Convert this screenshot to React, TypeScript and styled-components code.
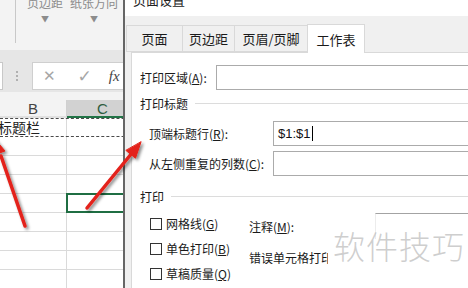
import React from "react";
import styled, { createGlobalStyle } from "styled-components";

const Global = createGlobalStyle`
  html, body {
    margin: 0;
    padding: 0;
    background: #fff;
  }
  body {
    font-family: "Noto Sans CJK SC", "Noto Sans", sans-serif;
    color: #1a1a1a;
  }
`;

const Screen = styled.div`
  position: relative;
  width: 468px;
  height: 288px;
  overflow: hidden;
  background: #fff;
`;

/* ---------- excel side ---------- */
const Sheet = styled.div`
  display: flex;
  flex-direction: column;
  width: 160px;
`;

const Ribbon = styled.div`
  height: 50px;
  background: #f3f3f3;
  display: flex;
`;

const RibbonSep = styled.div`
  width: 1px;
  height: 43px;
  margin-left: 15px;
  background: #c8c8c8;
`;

const RibbonGroup = styled.div`
  display: flex;
  gap: 7px;
  margin-left: 11px;
`;

const RibbonItem = styled.div`
  display: flex;
  flex-direction: column;
  align-items: center;
  font-size: 12px;
  line-height: 16px;
  color: #8c8c8c;
  margin-top: -5px;
  white-space: nowrap;
`;

const Caret = styled.span`
  font-size: 8px;
  line-height: 10px;
  margin-top: 3px;
  color: #8c8c8c;
`;

const FormulaBand = styled.div`
  height: 42px;
  background: #e6e6e6;
  display: flex;
  align-items: flex-start;
  padding-top: 12px;
  box-sizing: border-box;
`;

const NameBox = styled.div`
  width: 3px;
  height: 28px;
  background: #fff;
  border-right: 1px solid #c8c8c8;
  border-top: 1px solid #c8c8c8;
  border-bottom: 1px solid #c8c8c8;
  box-sizing: border-box;
`;

const Dots = styled.div`
  width: 2px;
  height: 10px;
  margin: 9px 0 0 13px;
  background: repeating-linear-gradient(#b0b0b0 0 2px, transparent 2px 4px);
`;

const FormulaBox = styled.div`
  margin-left: 14px;
  flex: 1;
  height: 28px;
  background: #fff;
  border: 1px solid #cfcfcf;
  box-sizing: border-box;
  display: flex;
  align-items: center;
  font-family: "DejaVu Sans", sans-serif;
  color: #a6a6a6;
`;

const FxGlyph = styled.span<{ $x: number; $size: number }>`
  margin-left: ${(p) => p.$x}px;
  font-size: ${(p) => p.$size}px;
  font-weight: bold;
`;

const Fx = styled.span`
  margin-left: 17px;
  font-family: "Liberation Serif", serif;
  font-style: italic;
  font-size: 15px;
  color: #444;
`;

const HeaderGap = styled.div`
  height: 8px;
  background: #f3f3f3;
`;

const ColHeaders = styled.div`
  display: flex;
  height: 18px;
  background: #f3f3f3;
`;

const ColHead = styled.div<{ $w: number; $sel?: boolean }>`
  width: ${(p) => p.$w}px;
  box-sizing: border-box;
  text-align: center;
  font-family: "Liberation Sans", sans-serif;
  font-size: 15px;
  line-height: 17px;
  color: ${(p) => (p.$sel ? "#2f5d3f" : "#444")};
  background: ${(p) => (p.$sel ? "#d2d2d2" : "#f3f3f3")};
  border-right: 1px solid #d0d0d0;
  border-bottom: 2px solid ${(p) => (p.$sel ? "#217346" : "#e0e0e0")};
`;

const Row = styled.div<{ $dashed?: boolean }>`
  display: flex;
  height: ${(p) => (p.$dashed ? 19 : 19)}px;
  box-sizing: border-box;
  border-bottom: ${(p) => (p.$dashed ? "1px dashed #4a4a4a" : "1px solid #dadada")};
  border-top: ${(p) => (p.$dashed ? "1px dashed #4a4a4a" : "0")};
`;

const Cell = styled.div<{ $w: number; $sel?: boolean }>`
  width: ${(p) => p.$w}px;
  box-sizing: border-box;
  border-right: 1px solid #dadada;
  font-size: 14px;
  line-height: 17px;
  white-space: nowrap;
  overflow: hidden;
  outline: ${(p) => (p.$sel ? "2px solid #1f6e43" : "none")};
  outline-offset: -1px;
`;

const CellText = styled.span`
  margin-left: -2px;
  color: #222;
`;

/* ---------- dialog ---------- */
const Dialog = styled.div`
  position: absolute;
  left: 123px;
  top: 0;
  width: 360px;
  height: 288px;
  border-left: 2px solid #666;
  background: #f0f0f0;
  display: flex;
  flex-direction: column;
`;

const TitleBar = styled.div`
  height: 16px;
  background: #fff;
  padding-left: 8px;
  font-size: 13px;
  line-height: 16px;
  color: #222;
  overflow: hidden;
`;

const TitleText = styled.div`
  margin-top: -8px;
`;

const TabStrip = styled.div`
  display: flex;
  align-items: flex-end;
  height: 36px;
  padding-left: 2px;
  position: relative;
  z-index: 1;
`;

const Tab = styled.div<{ $w: number; $active?: boolean }>`
  width: ${(p) => p.$w}px;
  height: ${(p) => (p.$active ? 29 : 27)}px;
  margin-bottom: ${(p) => (p.$active ? -1 : 0)}px;
  box-sizing: border-box;
  background: ${(p) => (p.$active ? "#fff" : "#f0f0f0")};
  border: 1px solid #d9d9d9;
  border-bottom: ${(p) => (p.$active ? "none" : "1px solid #d9d9d9")};
  margin-left: -1px;
  display: flex;
  align-items: center;
  justify-content: center;
  font-size: 13px;
  color: #1a1a1a;
`;

const Panel = styled.div`
  flex: 1;
  margin-left: 6px;
  background: #fff;
  border-top: 1px solid #d9d9d9;
  border-left: 1px solid #d9d9d9;
  padding: 12px 0 0 8px;
  display: flex;
  flex-direction: column;
  font-size: 12px;
  color: #1a1a1a;
`;

const FieldRow = styled.div<{ $indent?: number; $gap?: number }>`
  display: flex;
  align-items: center;
  height: 25px;
  margin-left: ${(p) => p.$indent ?? 0}px;
  margin-top: ${(p) => p.$gap ?? 0}px;
`;

const Label = styled.div<{ $w: number }>`
  width: ${(p) => p.$w}px;
  flex-shrink: 0;
  white-space: nowrap;
  overflow: hidden;
`;

const TextInput = styled.div`
  flex: 1;
  height: 25px;
  box-sizing: border-box;
  border: 1px solid #ababab;
  border-right: none;
  display: flex;
  align-items: center;
  padding-left: 4px;
  font-family: "Liberation Sans", sans-serif;
  font-size: 13px;
  color: #111;
`;

const Caret2 = styled.span`
  display: inline-block;
  width: 1px;
  height: 15px;
  background: #000;
  margin-left: 1px;
`;

const Group = styled.div<{ $gap: number }>`
  display: flex;
  align-items: center;
  gap: 7px;
  height: 16px;
  margin-top: ${(p) => p.$gap}px;
  &::after {
    content: "";
    flex: 1;
    height: 1px;
    background: #dcdcdc;
  }
`;

const Options = styled.div`
  display: flex;
`;

const CheckCol = styled.div`
  display: flex;
  flex-direction: column;
  margin-left: 10px;
  margin-top: 7px;
  width: 99px;
`;

const CheckItem = styled.div`
  display: flex;
  align-items: center;
  height: 25px;
  gap: 4px;
  white-space: nowrap;
`;

const Box = styled.span`
  width: 12px;
  height: 12px;
  box-sizing: border-box;
  border: 1px solid #333;
  background: #fff;
`;

const RightCol = styled.div`
  display: flex;
  flex-direction: column;
  margin-top: 9px;
  flex: 1;
`;

const SelectRow = styled.div`
  display: flex;
  align-items: center;
  height: 26px;
`;

const SelectBox = styled.div`
  flex: 1;
  height: 26px;
  box-sizing: border-box;
  border-top: 1px solid #a3a3a3;
  border-left: 1px solid #ececec;
`;

const ErrLabel = styled(Label)`
  margin-top: 11px;
  height: 16px;
  line-height: 16px;
`;

const Watermark = styled.div`
  position: absolute;
  left: 333px;
  top: 223px;
  font-size: 32px;
  letter-spacing: 1px;
  line-height: 44px;
  color: rgba(190, 190, 190, 0.75);
  font-weight: 300;
`;

const ArrowLayer = styled.svg`
  position: absolute;
  left: 0;
  top: 0;
  pointer-events: none;
`;

const rows = Array.from({ length: 8 }, (_, i) => i);

const checks = [
  { text: "网格线", key: "G" },
  { text: "单色打印", key: "B" },
  { text: "草稿质量", key: "Q" },
];

export default function App() {
  return (
    <Screen>
      <Global />
      <Sheet>
        <Ribbon>
          <RibbonSep />
          <RibbonGroup>
            <RibbonItem>
              页边距
              <Caret>▼</Caret>
            </RibbonItem>
            <RibbonItem>
              纸张方向
              <Caret>▼</Caret>
            </RibbonItem>
            <RibbonItem>纟</RibbonItem>
          </RibbonGroup>
        </Ribbon>
        <FormulaBand>
          <NameBox />
          <Dots />
          <FormulaBox>
            <FxGlyph $x={10} $size={15}>
              ✕
            </FxGlyph>
            <FxGlyph $x={22} $size={17}>
              ✓
            </FxGlyph>
            <Fx>fx</Fx>
          </FormulaBox>
        </FormulaBand>
        <HeaderGap />
        <ColHeaders>
          <ColHead $w={67}>B</ColHead>
          <ColHead $w={72} $sel>
            C
          </ColHead>
        </ColHeaders>
        <Row $dashed>
          <Cell $w={67}>
            <CellText>标题栏</CellText>
          </Cell>
          <Cell $w={72} />
        </Row>
        {rows.map((i) => (
          <Row key={i}>
            <Cell $w={67} />
            <Cell $w={72} $sel={i === 3} />
          </Row>
        ))}
      </Sheet>

      <Dialog>
        <TitleBar>
          <TitleText>页面设置</TitleText>
        </TitleBar>
        <TabStrip>
          <Tab $w={57}>页面</Tab>
          <Tab $w={53}>页边距</Tab>
          <Tab $w={74}>页眉/页脚</Tab>
          <Tab $w={58} $active>
            工作表
          </Tab>
        </TabStrip>
        <Panel>
          <FieldRow>
            <Label $w={76}>
              打印区域(<u>A</u>):
            </Label>
            <TextInput />
          </FieldRow>
          <Group $gap={5}>打印标题</Group>
          <FieldRow $indent={9} $gap={10}>
            <Label $w={124}>
              顶端标题行(<u>R</u>):
            </Label>
            <TextInput>
              $1:$1
              <Caret2 />
            </TextInput>
          </FieldRow>
          <FieldRow $indent={9} $gap={5}>
            <Label $w={124}>
              从左侧重复的列数(<u>C</u>):
            </Label>
            <TextInput />
          </FieldRow>
          <Group $gap={12}>打印</Group>
          <Options>
            <CheckCol>
              {checks.map((c) => (
                <CheckItem key={c.key}>
                  <Box />
                  <span>
                    {c.text}(<u>{c.key}</u>)
                  </span>
                </CheckItem>
              ))}
            </CheckCol>
            <RightCol>
              <SelectRow>
                <Label $w={126}>
                  注释(<u>M</u>):
                </Label>
                <SelectBox />
              </SelectRow>
              <ErrLabel $w={79}>错误单元格打印为(E):</ErrLabel>
            </RightCol>
          </Options>
        </Panel>
      </Dialog>

      <ArrowLayer width="468" height="288" viewBox="0 0 468 288">
        <defs>
          <filter id="sh" x="-50%" y="-50%" width="200%" height="200%">
            <feDropShadow dx="2" dy="2" stdDeviation="1.6" floodColor="#000" floodOpacity="0.45" />
          </filter>
        </defs>
        <g filter="url(#sh)" fill="#e3231a" stroke="#e3231a" strokeLinecap="round">
          <line x1="25" y1="226" x2="1" y2="156" strokeWidth="3.5" />
          <polygon points="-6,138 5,151 -6.4,155" strokeWidth="1" />
          <line x1="87" y1="208" x2="132" y2="153" strokeWidth="3.5" />
          <polygon points="141,142 135.5,158.2 126.1,150.6" strokeWidth="1" />
        </g>
      </ArrowLayer>

      <Watermark>软件技巧</Watermark>
    </Screen>
  );
}
